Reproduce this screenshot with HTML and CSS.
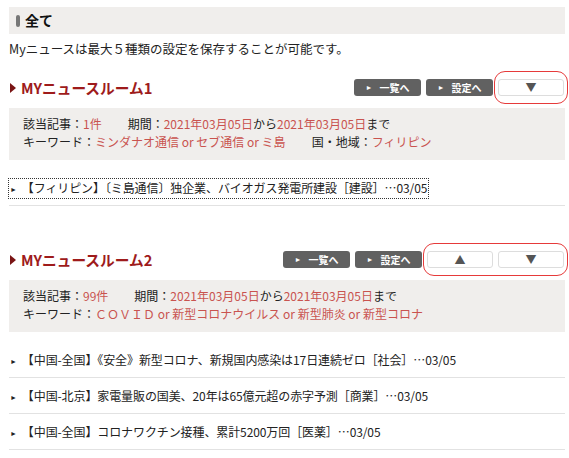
FILE: index.html
```html
<!DOCTYPE html>
<html lang="ja">
<head>
<meta charset="utf-8">
<link rel="stylesheet" href="styles.css">
</head>
<body>
<div class="page">
  <div class="titlebar"><span class="tb-mark"></span><span class="tb-text">全て</span></div>
  <p class="desc">Myニュースは最大５種類の設定を保存することが可能です。</p>

  <section class="room">
    <div class="room-head">
      <h2 class="room-title"><span class="tri"></span>MYニュースルーム1</h2>
      <div class="btns">
        <span class="btn dark"><span class="bt">►</span>一覧へ</span>
        <span class="btn dark"><span class="bt">►</span>設定へ</span>
        <div class="hl">
          <span class="btn light">▼</span>
        </div>
      </div>
    </div>
    <div class="info">
      <div>該当記事：<span class="r">1件</span><span class="sp"></span>期間：<span class="r">2021年03月05日</span>から<span class="r">2021年03月05日</span>まで</div>
      <div>キーワード：<span class="r">ミンダナオ通信 or セブ通信 or ミ島</span><span class="sp"></span>国・地域：<span class="r">フィリピン</span></div>
    </div>
    <ul class="news">
      <li><span class="item focus"><span class="b">►</span>【フィリピン】〔ミ島通信〕独企業、バイオガス発電所建設［建設］…03/05</span></li>
    </ul>
  </section>

  <section class="room room2">
    <div class="room-head">
      <h2 class="room-title"><span class="tri"></span>MYニュースルーム2</h2>
      <div class="btns">
        <span class="btn dark"><span class="bt">►</span>一覧へ</span>
        <span class="btn dark"><span class="bt">►</span>設定へ</span>
        <div class="hl">
          <span class="btn light">▲</span>
          <span class="btn light">▼</span>
        </div>
      </div>
    </div>
    <div class="info">
      <div>該当記事：<span class="r">99件</span><span class="sp"></span>期間：<span class="r">2021年03月05日</span>から<span class="r">2021年03月05日</span>まで</div>
      <div>キーワード：<span class="r">ＣＯＶＩＤ or 新型コロナウイルス or 新型肺炎 or 新型コロナ</span></div>
    </div>
    <ul class="news">
      <li><span class="item"><span class="b">►</span>【中国-全国】《安全》新型コロナ、新規国内感染は17日連続ゼロ［社会］…03/05</span></li>
      <li><span class="item"><span class="b">►</span>【中国-北京】家電量販の国美、20年は65億元超の赤字予測［商業］…03/05</span></li>
      <li><span class="item"><span class="b">►</span>【中国-全国】コロナワクチン接種、累計5200万回［医薬］…03/05</span></li>
    </ul>
  </section>
</div>
</body>
</html>
```
FILE: styles.css
```css
* { box-sizing: border-box; }
html, body { margin: 0; padding: 0; background: #fff; }
body {
  font-family: "Noto Sans CJK JP", "Noto Sans", sans-serif;
  font-size: 12px;
  color: #222;
  line-height: 1.5;
}
.page { padding: 7px 4px 0 9px; }
.titlebar {
  background: #f0eeec;
  height: 27px;
  display: flex;
  align-items: center;
  padding-left: 7px;
}
.tb-mark {
  width: 4px;
  height: 12px;
  border-radius: 2px;
  background: #777;
  margin-right: 5px;
}
.tb-text { font-size: 14px; font-weight: bold; color: #111; }
.desc { margin: 6px 0 0 0; font-size: 12.5px; }

.room { margin-top: 15px; }
.room2 { margin-top: 40px; }
.room-head {
  display: flex;
  align-items: center;
  justify-content: space-between;
  height: 34px;
  padding-bottom: 6px;
}
.room-title {
  margin: 0;
  font-size: 14.7px;
  font-weight: bold;
  color: #9e1b1b;
  display: flex;
  align-items: center;
}
.tri {
  width: 0; height: 0;
  border-top: 5px solid transparent;
  border-bottom: 5px solid transparent;
  border-left: 6px solid #7a1515;
  margin: 0 5px 0 1px;
}
.btns { display: flex; align-items: center; gap: 5px; margin-right: 2px; }
.btn {
  width: 67px;
  height: 17px;
  border-radius: 3px;
  display: flex;
  align-items: center;
  justify-content: center;
  font-size: 10px;
  font-weight: bold;
  line-height: 1;
}
.btn.dark { background: #616161; color: #fff; }
.bt { font-size: 7px; margin-right: 7px; }
.btn.light {
  background: #fff;
  border: 1px solid #ddd;
  color: #555;
  font-size: 11px;
  width: 66px;
}
.hl {
  display: flex;
  gap: 5px;
  border: 1px solid #e63a3a;
  border-radius: 11px;
  padding: 7px 3px;
  margin: -7px -5px -7px -4px;
}
.info {
  background: #f0eeec;
  padding: 7px 14px 9px 14px;
  line-height: 18px;
  font-size: 12px;
  color: #222;
}
.r { color: #c9534f; }
.sp { display: inline-block; width: 26px; }
.news { list-style: none; margin: 10px 0 0 0; padding: 0; }
.news li {
  border-bottom: 1px solid #e2e2e2;
  height: 36px;
  padding-top: 8px;
  display: flex;
  align-items: flex-start;
}
.item {
  display: block;
  line-height: 17px;
  padding: 0 1px;
  margin-left: -1px;
  border: 1px solid transparent;
  letter-spacing: -0.1px;
}
.item.focus { border: 1px dotted #333; }
.b { font-size: 7px; margin-right: 5px; vertical-align: 1px; }
```
